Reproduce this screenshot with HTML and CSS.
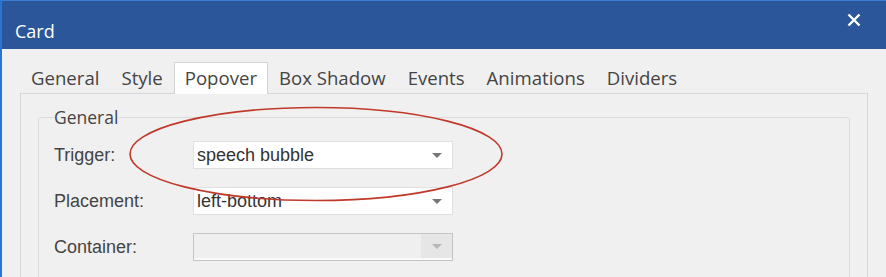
FILE: index.html
```html
<!DOCTYPE html>
<html lang="en">

<head>
    <meta charset="UTF-8">
    <meta name="viewport" content="width=device-width, initial-scale=1.0">
    <title>Card</title>
    <link rel="stylesheet" href="styles.css">
</head>

<body>
    <div id="dialog">
        <div class="titlebar">
            <span class="title">Card</span>
            <svg class="close" width="14" height="14" viewBox="0 0 14 14">
                <path d="M1.5 1.5 L12.5 12.5 M12.5 1.5 L1.5 12.5" stroke="#fff" stroke-width="2.4" />
            </svg>
        </div>

        <div class="content">
            <div class="tabs">
                <div class="tab">General</div>
                <div class="tab">Style</div>
                <div class="tab active">Popover</div>
                <div class="tab">Box Shadow</div>
                <div class="tab">Events</div>
                <div class="tab">Animations</div>
                <div class="tab">Dividers</div>
            </div>

            <div class="panel">
                <fieldset class="group">
                    <legend>General</legend>

                    <div class="rows">
                        <label>Trigger:</label>
                        <div class="select">
                            <span class="value">speech bubble</span>
                            <span class="drop"><i class="arrow"></i></span>
                        </div>

                        <label>Placement:</label>
                        <div class="select">
                            <span class="value">left-bottom</span>
                            <span class="drop"><i class="arrow"></i></span>
                        </div>

                        <label>Container:</label>
                        <div class="select disabled">
                            <span class="value"></span>
                            <span class="drop"><i class="arrow"></i></span>
                        </div>
                    </div>
                </fieldset>
            </div>
        </div>

        <!-- marcação vermelha por cima -->
        <svg class="mark" width="886" height="277">
            <ellipse cx="316" cy="154" rx="186" ry="46.5" fill="none" stroke="#c0392b" stroke-width="1.6" />
        </svg>
    </div>
</body>

</html>
```

FILE: styles.css
```css
body {
    margin: 0;
    background-color: #f0f0f0;
    font-family: "Liberation Sans", Arial, sans-serif;
}

#dialog {
    position: relative;
    width: 886px;
    height: 277px;
    box-sizing: border-box;
    border-left: 2px solid #2a74d4;
    overflow: hidden;
}

.titlebar {
    display: flex;
    justify-content: space-between;
    align-items: flex-start;
    height: 48px;
    background-color: #2b579a;
    border-top: 1px solid #3a7bd5;
}

.title {
    font-family: "Open Sans", sans-serif;
    font-size: 18px;
    line-height: 24px;
    color: #fff;
    margin: 18px 0 0 13px;
}

.close {
    margin: 12px 25px 0 0;
}

.content {
    padding: 0 18px 0 18px;
}

.tabs {
    display: flex;
    margin-top: 13px;
    height: 31px;
}

.tab {
    font-family: "Open Sans", sans-serif;
    font-size: 18.6px;
    line-height: 30px;
    color: #444;
    padding: 0 10px;
    border: 1px solid transparent;
    border-bottom: none;
}

.tab.active {
    background-color: #fff;
    border-color: #d3d3d3;
    height: 31px;
    position: relative;
    z-index: 1;
}

.panel {
    border: 1px solid #d6d6d6;
    padding: 13px 17px 40px 17px;
}

.group {
    margin: 0;
    padding: 0 0 20px 15px;
    border: 1px solid #dcdcdc;
    border-radius: 3px;
}

.group legend {
    font-family: "Open Sans", sans-serif;
    font-size: 17.5px;
    line-height: 20px;
    color: #444;
    padding: 0;
}

.rows {
    display: grid;
    grid-template-columns: 139px 260px;
    row-gap: 18px;
    align-items: center;
    margin-top: 14px;
}

.rows label {
    font-size: 18px;
    color: #444;
}

.select {
    display: flex;
    align-items: stretch;
    height: 28px;
    box-sizing: border-box;
    background-color: #fff;
    border: 1px solid #e0e0e0;
    font-size: 18px;
    color: #333;
}

.select .value {
    flex: 1;
    padding-left: 3px;
    line-height: 26px;
}

.select .drop {
    width: 31px;
    display: flex;
    align-items: center;
    justify-content: center;
}

.arrow {
    width: 0;
    height: 0;
    border-left: 5px solid transparent;
    border-right: 5px solid transparent;
    border-top: 5px solid #777;
}

.select.disabled {
    background-color: #efefef;
    border-color: #c4c4c4;
    box-shadow: inset 0 -2px 0 #fafafa;
}

.select.disabled .drop {
    background-color: #e6e6e6;
    margin-bottom: 2px;
}

.select.disabled .arrow {
    border-top-color: #b8b8b8;
}

.mark {
    position: absolute;
    top: 0;
    left: -2px;
    pointer-events: none;
}
```
